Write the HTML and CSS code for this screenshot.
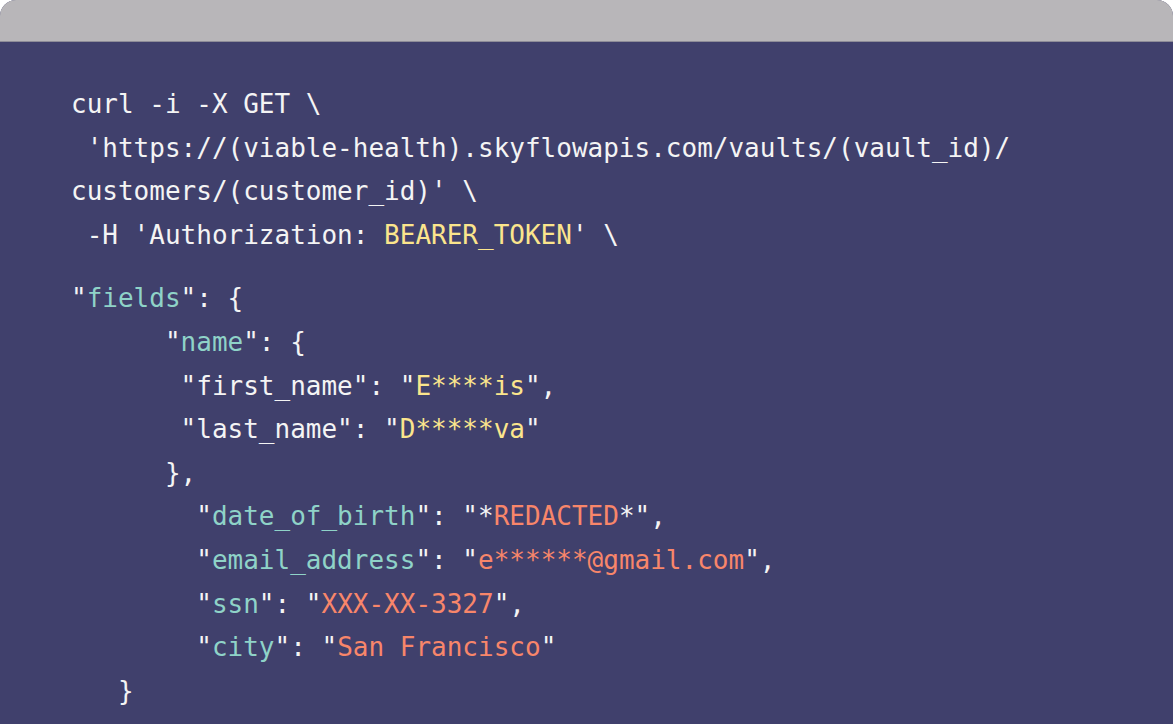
FILE: index.html
```html
<!DOCTYPE html>
<html>
<head>
<meta charset="utf-8">
<link rel="stylesheet" href="styles.css">
</head>
<body>
<div class="window">
  <div class="titlebar"></div>
  <div class="code">
<pre class="block">curl -i -X GET \
 'https://(viable-health).skyflowapis.com/vaults/(vault_id)/
customers/(customer_id)' \
 -H 'Authorization: <span class="y">BEARER_TOKEN</span>' \</pre>
<pre class="block json">"<span class="k">fields</span>": {
      "<span class="k">name</span>": {
       "first_name": "<span class="y">E****is</span>",
       "last_name": "<span class="y">D*****va</span>"
      },
        "<span class="k">date_of_birth</span>": "*<span class="o">REDACTED</span>*",
        "<span class="k">email_address</span>": "<span class="o">e******@gmail.com</span>",
        "<span class="k">ssn</span>": "<span class="o">XXX-XX-3327</span>",
        "<span class="k">city</span>": "<span class="o">San Francisco</span>"
   }</pre>
  </div>
</div>
</body>
</html>
```
FILE: styles.css
```css
html, body {
  margin: 0;
  padding: 0;
  background: #ffffff;
}
.window {
  width: 1173px;
  height: 724px;
  display: flex;
  flex-direction: column;
  background: #40406c;
  border-radius: 16px 16px 0 0;
  overflow: hidden;
}
.titlebar {
  height: 41px;
  flex: none;
  background: #b8b6b9;
  border-bottom: 1px solid #8e8c98;
}
.code {
  padding: 41px 0 0 71px;
}
.block {
  margin: 0;
  font-family: "DejaVu Sans Mono", "Liberation Mono", monospace;
  font-size: 26px;
  line-height: 43.6px;
  color: #f4f4f4;
  letter-spacing: 0;
}
.json {
  margin-top: 20px;
}
.k { color: #8fd3c8; }
.y { color: #fbe58c; }
.o { color: #f8866a; }
```
